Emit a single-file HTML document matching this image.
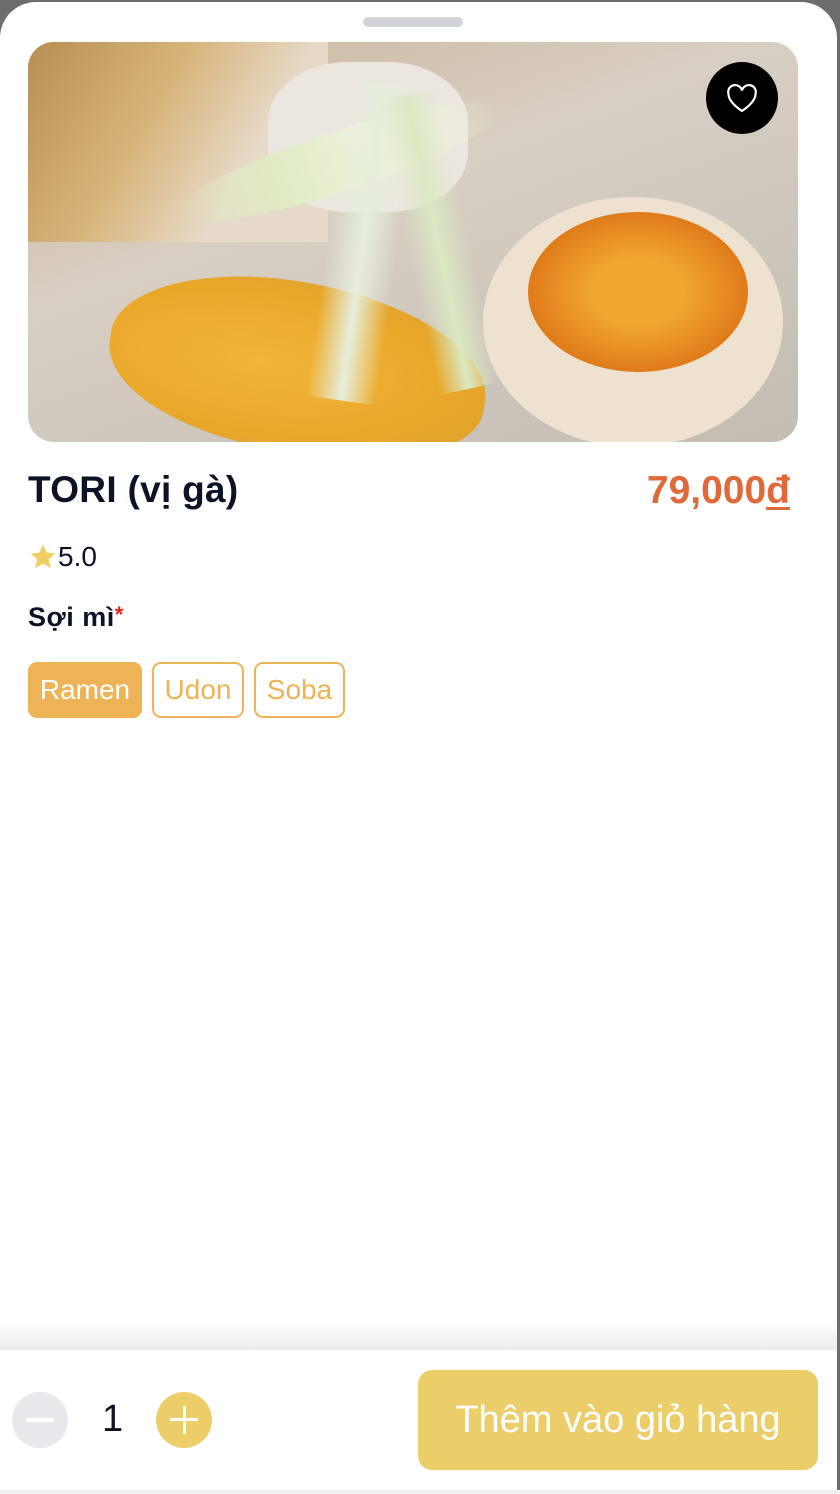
<!DOCTYPE html>
<html><head><meta charset="utf-8"><style>
*{margin:0;padding:0;box-sizing:border-box}
body{width:840px;height:1494px;background:#6d6d6d;font-family:"Liberation Sans",sans-serif;position:relative;overflow:hidden}
.sheet{position:absolute;left:0;top:2px;width:837px;height:1492px;background:#fff;border-radius:36px 36px 0 0}
.handle{position:absolute;left:363px;top:17px;width:100px;height:10px;border-radius:5px;background:#d1d5db}
.img{position:absolute;left:28px;top:42px;width:770px;height:400px;border-radius:26px;overflow:hidden;background:linear-gradient(160deg,#c9b49a 0%,#d8cfc3 40%,#cdc6bc 70%,#c3bcb2 100%)}
.img div{position:absolute}
.heart{position:absolute;left:706px;top:62px;width:72px;height:72px;border-radius:50%;background:#000;display:flex;align-items:center;justify-content:center}
.title{position:absolute;left:28px;top:469px;font-size:37px;font-weight:bold;color:#0d1326;letter-spacing:.3px}
.price{position:absolute;right:50px;top:469px;font-size:39px;font-weight:bold;color:#e0693a}
.price u{text-decoration-thickness:3px;text-underline-offset:4px}
.rating{position:absolute;left:28px;top:541px;font-size:28px;color:#0d1326;display:flex;align-items:center}
.label{position:absolute;left:28px;top:602px;font-size:27px;font-weight:bold;color:#0d1326;letter-spacing:.5px}
.label span{color:#e22;font-size:22px;vertical-align:top}
.chip{position:absolute;top:662px;height:56px;border:2px solid #eeb257;border-radius:9px;color:#eeb257;font-size:28px;display:flex;align-items:center;justify-content:center}
.shadow{position:absolute;left:0;top:1320px;width:837px;height:30px;background:linear-gradient(#fff,#ececec)}
.bar{position:absolute;left:0;top:1350px;width:837px;height:140px;background:#fff}
.foot{position:absolute;left:0;top:1490px;width:840px;height:4px;background:#f3f1f0}
.circ{position:absolute;top:1392px;width:56px;height:56px;border-radius:50%}
.btn{position:absolute;left:418px;top:1370px;width:400px;height:100px;border-radius:14px;background:#ebcd69;color:#fff;font-size:38px;display:flex;align-items:center;justify-content:center}
</style></head><body>
<div class="sheet"></div>
<div class="handle"></div>
<div class="img">
 <div style="left:0;top:0;width:300px;height:200px;background:linear-gradient(120deg,#b58a4a,#d9b377 40%,#e8dccb 70%);opacity:.9"></div>
 <div style="left:240px;top:20px;width:200px;height:150px;background:#ece6e0;border-radius:40%"></div>
 <div style="left:80px;top:240px;width:380px;height:170px;background:radial-gradient(ellipse at 40% 50%,#f2b63a,#e9a72a 60%,#d8a030);border-radius:45% 55% 40% 50%;transform:rotate(8deg)"></div>
 <div style="left:455px;top:155px;width:300px;height:250px;background:#ede1cf;border-radius:50%"></div>
 <div style="left:500px;top:170px;width:220px;height:160px;background:radial-gradient(ellipse,#f0a631 30%,#e07c1a 70%,#d88a3a);border-radius:50%"></div>
 <div style="left:140px;top:90px;width:340px;height:60px;background:linear-gradient(90deg,transparent,#dfeac2 30%,#eef3dc 60%,transparent);transform:rotate(-18deg);border-radius:50%"></div>
 <div style="left:300px;top:40px;width:70px;height:320px;background:linear-gradient(90deg,transparent,#e6eedb,transparent);transform:rotate(8deg)"></div>
 <div style="left:380px;top:50px;width:60px;height:300px;background:linear-gradient(90deg,transparent,#dbe8c2,transparent);transform:rotate(-12deg)"></div>
</div>
<div class="heart"><svg width="34" height="30" viewBox="0 0 24 22"><path d="M12 20.5S2 14.5 2 7.8A5 5 0 0 1 12 5.5a5 5 0 0 1 10 2.3C22 14.5 12 20.5 12 20.5z" fill="none" stroke="#fff" stroke-width="1.6"/></svg></div>
<div class="title">TORI (vị gà)</div>
<div class="price">79,000<u>đ</u></div>
<div class="rating"><svg width="30" height="30" viewBox="0 0 24 24"><path d="M12 2l2.9 6.6 7.1.6-5.4 4.7 1.6 7L12 17.2 5.8 20.9l1.6-7L2 9.2l7.1-.6z" fill="#efcf62"/></svg><span>5.0</span></div>
<div class="label">Sợi mì<span>*</span></div>
<div class="chip" style="left:28px;width:114px;background:#eeb257;color:#fff">Ramen</div>
<div class="chip" style="left:152px;width:92px">Udon</div>
<div class="chip" style="left:254px;width:91px">Soba</div>
<div class="shadow"></div>
<div class="bar"></div>
<div class="foot"></div>
<div class="circ" style="left:12px;background:#e8e9ed"><div style="position:absolute;left:14px;top:26px;width:28px;height:4px;border-radius:2px;background:#fff"></div></div>
<div style="position:absolute;left:102px;top:1398px;font-size:38px;color:#0d1326">1</div>
<div class="circ" style="left:156px;background:#ebcd69"><div style="position:absolute;left:14px;top:26px;width:28px;height:3px;background:#fff"></div><div style="position:absolute;left:26.5px;top:14px;width:3px;height:28px;background:#fff"></div></div>
<div class="btn">Thêm vào giỏ hàng</div>
</body></html>
